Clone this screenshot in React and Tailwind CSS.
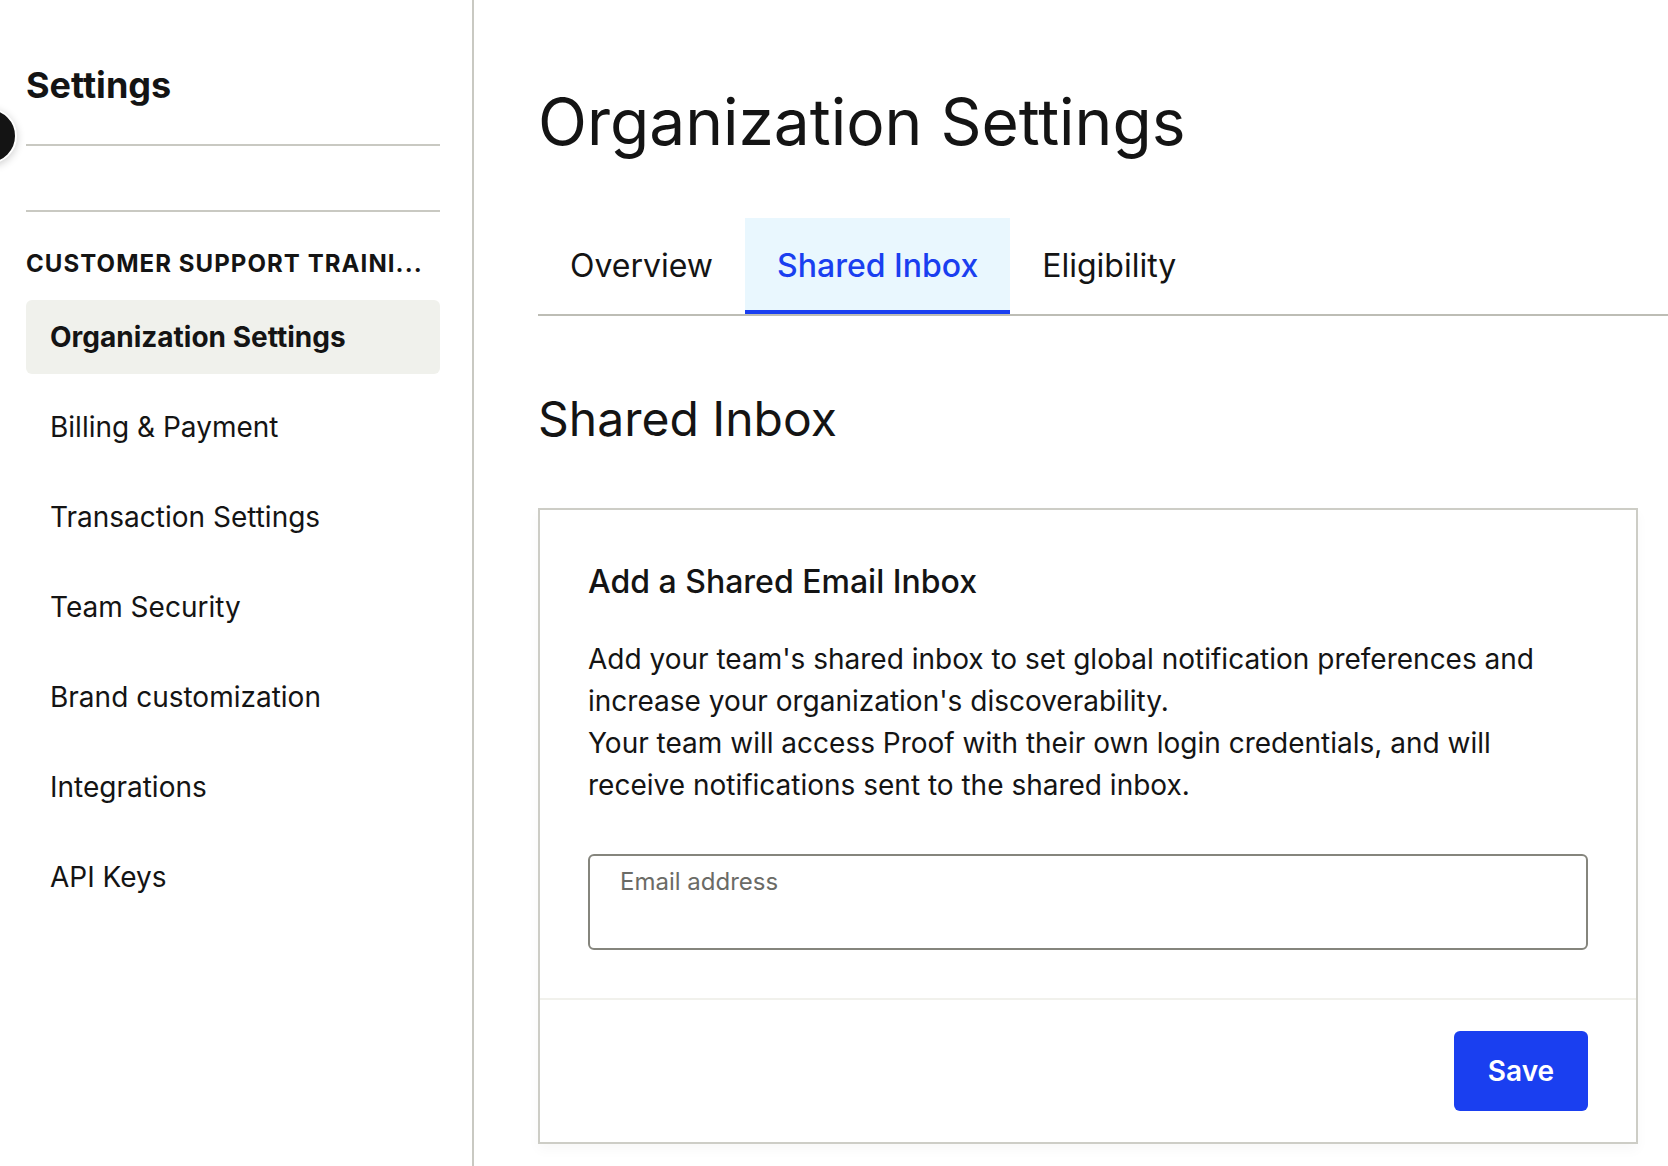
const navItems = [
  "Billing & Payment",
  "Transaction Settings",
  "Team Security",
  "Brand customization",
  "Integrations",
  "API Keys",
];

const Sidebar = () => (
  <aside className="relative h-full w-[474px] shrink-0 border-r-2 border-[#c9c9c2] pl-[26px] pr-[32px] pt-[62px]">
    <div className="absolute left-[-39px] top-[108px] h-[56px] w-[56px] rounded-full border-2 border-white bg-[#141414] shadow-[0_2px_8px_rgba(0,0,0,0.2)]"></div>
    <h2 className="h-[46px] text-[36px] font-bold leading-[46px] text-[#141414]">Settings</h2>
    <div className="mt-[36px] h-[2px] bg-[#c9c9c2]"></div>
    <div className="mt-[64px] h-[2px] bg-[#c9c9c2]"></div>
    <div className="mt-[35px] whitespace-nowrap text-[24px] font-bold uppercase leading-[34px] tracking-[1.07px] text-[#141414]">
      Customer Support Traini...
    </div>
    <nav className="mt-[19px]">
      <div className="flex h-[74px] items-center rounded-[6px] bg-[#f0f1ec] px-[24px] text-[28px] font-bold text-[#141414]">
        Organization Settings
      </div>
      {navItems.map((item) => (
        <div key={item} className="mt-[16px] flex h-[74px] items-center px-[24px] text-[28px] text-[#141414]">
          {item}
        </div>
      ))}
    </nav>
  </aside>
);

const Tabs = () => (
  <div className="mt-[47px] flex h-[98px] border-b-2 border-[#bdbdb5] text-[32px] text-[#141414]">
    <div className="flex h-[96px] items-center px-[32px]">Overview</div>
    <div className="flex h-[96px] items-center border-b-4 border-[#1a3ff0] bg-[#e9f7fe] px-[32px] pt-[4px] font-medium text-[#1a3ff0]">
      Shared Inbox
    </div>
    <div className="flex h-[96px] items-center px-[32px]">Eligibility</div>
  </div>
);

const InboxCard = () => (
  <section className="mr-[30px] mt-[54px] h-[636px] border-2 border-[#cdcdc6] shadow-[0_6px_12px_rgba(0,0,0,0.03)]">
    <div className="h-[488px] px-[48px] pt-[50px]">
      <h3 className="text-[32px] font-medium leading-[44px] text-[#141414]">Add a Shared Email Inbox</h3>
      <p className="mt-[34px] text-[28px] leading-[42px] text-[#141414]">
        Add your team's shared inbox to set global notification preferences and
        <br />
        increase your organization's discoverability.
        <br />
        Your team will access Proof with their own login credentials, and will
        <br />
        receive notifications sent to the shared inbox.
      </p>
      <div className="mt-[48px] h-[96px] rounded-[6px] border-2 border-[#85857d] px-[30px] pt-[10px] text-[24px] leading-[32px] text-[#6b6b66]">
        Email address
      </div>
    </div>
    <div className="flex h-[144px] justify-end border-t-2 border-[#f1f1ec] px-[48px] pt-[31px]">
      <button className="h-[80px] w-[134px] rounded-[6px] bg-[#1a3ff0] text-[28px] font-semibold text-white">Save</button>
    </div>
  </section>
);

const App = () => (
  <div className="flex h-[1166px] w-[1668px] overflow-hidden bg-white font-['Inter',sans-serif]">
    <Sidebar />
    <main className="flex-1 pl-[64px] pt-[72px]">
      <h1 className="h-[99px] text-[64px] leading-[99px] text-[#141414]">Organization Settings</h1>
      <Tabs />
      <h2 className="mt-[68px] h-[70px] text-[48px] leading-[70px] text-[#141414]">Shared Inbox</h2>
      <InboxCard />
    </main>
  </div>
);

export default App;
